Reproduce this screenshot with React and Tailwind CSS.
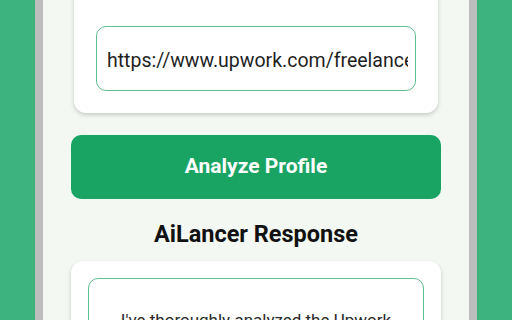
export default function App() {
  return (
    <div className="flex h-[320px] w-[512px] overflow-hidden bg-[#3db37f] font-['Roboto',sans-serif]">
      <div className="w-[35px] shrink-0 bg-[#3db37f]" />
      <div className="w-[8px] shrink-0 bg-[#bdbdbd]" />

      <div className="flex w-[426px] min-w-0 shrink-0 flex-col bg-[#f4f8f2] px-[28px]">
        {/* URL card */}
        <div className="mx-[3px] -mt-[20px] rounded-[12px] bg-white px-[22px] pb-[22px] pt-[46px] shadow-[0_2px_4px_rgba(0,0,0,0.18)]">
          <div className="flex h-[65px] min-w-0 items-center overflow-hidden rounded-[10px] border-[1.5px] border-[#5ebf90] bg-white pl-[10px] pr-[7px] pt-[5px]">
            <span className="block min-w-0 overflow-hidden whitespace-nowrap text-[19.5px] text-[#1f1f1f]">
              https://www.upwork.com/freelancers/~01
            </span>
          </div>
        </div>

        <button
          type="button"
          className="mt-[22px] flex h-[64px] w-full shrink-0 items-center justify-center rounded-[10px] bg-[#19a463] text-[21px] font-bold text-white"
        >
          Analyze Profile
        </button>

        <h2 className="mt-[21px] text-center text-[23.5px] font-bold leading-[28px] text-[#111]">
          AiLancer Response
        </h2>

        {/* Response card */}
        <div className="mt-[13px] rounded-[12px] bg-white px-[17px] pt-[17px] shadow-[0_2px_4px_rgba(0,0,0,0.18)]">
          <div className="h-[120px] rounded-t-[10px] border-[1.5px] border-[#5ebf90] px-[16px] pt-[29px] text-center">
            <p className="text-[17px] leading-[24px] text-[#2a2a2a]">
              I've thoroughly analyzed the Upwork profile you shared.
            </p>
          </div>
        </div>
      </div>

      <div className="w-[8px] shrink-0 bg-[#bdbdbd]" />
      <div className="w-[35px] shrink-0 bg-[#3db37f]" />
    </div>
  );
}
